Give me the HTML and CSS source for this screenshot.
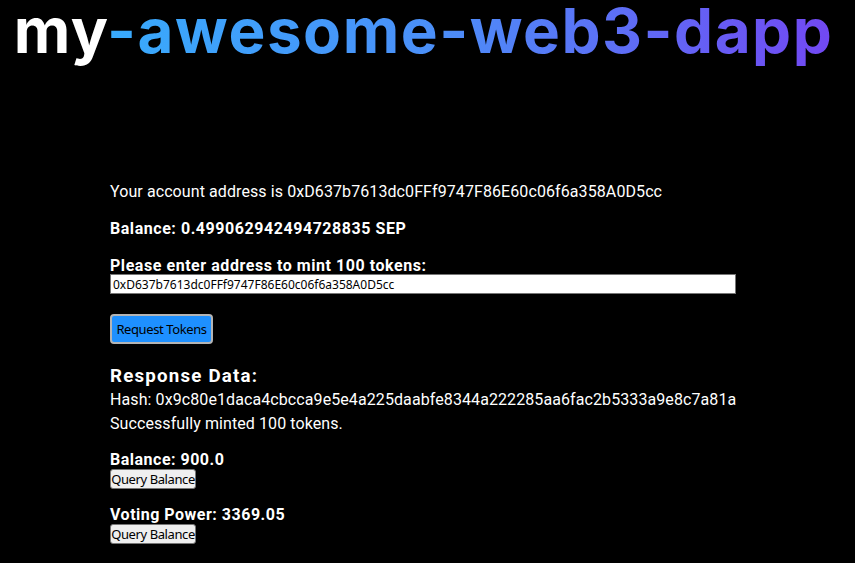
FILE: index.html
```html
<!DOCTYPE html>
<html lang="en">
<head>
<meta charset="utf-8">
<title>my-awesome-web3-dapp</title>
<link rel="stylesheet" href="styles.css">
</head>
<body>
<header class="hero">
  <h1 class="hero-title"><span class="hero-my">my</span><span class="hero-grad">-awesome-web3-dapp</span></h1>
</header>
<main class="panel">
  <p class="line">Your account address is 0xD637b7613dc0FFf9747F86E60c06f6a358A0D5cc</p>
  <p class="line line-bold">Balance: 0.499062942494728835 SEP</p>
  <label class="line line-bold mint-label" for="mint-addr">Please enter address to mint 100 tokens:</label>
  <input id="mint-addr" class="addr-input" type="text" value="0xD637b7613dc0FFf9747F86E60c06f6a358A0D5cc">
  <div class="request-row"><button class="btn-request" type="button">Request Tokens</button></div>
  <h3 class="response-title">Response Data:</h3>
  <div class="response-body">
    <div>Hash: 0x9c80e1daca4cbcca9e5e4a225daabfe8344a222285aa6fac2b5333a9e8c7a81a</div>
    <div>Successfully minted 100 tokens.</div>
  </div>
  <section class="query">
    <div class="query-label">Balance: 900.0</div>
    <button class="btn-query" type="button">Query Balance</button>
  </section>
  <section class="query">
    <div class="query-label">Voting Power: 3369.05</div>
    <button class="btn-query" type="button">Query Balance</button>
  </section>
</main>
</body>
</html>
```
FILE: styles.css
```css
html, body {
  margin: 0;
  padding: 0;
  background: #000;
  color: #fff;
  font-family: Roboto, "Noto Sans", sans-serif;
  font-size: 16px;
  line-height: 20px;
  letter-spacing: 0.09px;
}

.hero {
  text-align: center;
  padding-right: 8px;
}

.hero-title {
  margin: 0;
  font-family: Inter, "Liberation Sans", sans-serif;
  font-weight: 700;
  font-size: 62px;
  line-height: 62px;
  letter-spacing: 1.5px;
}

.hero-my {
  color: #fff;
}

.hero-grad {
  background: linear-gradient(90deg, #38aafc 0%, #4b8ff8 45%, #7248f3 100%);
  -webkit-background-clip: text;
  background-clip: text;
  color: transparent;
}

.panel {
  padding: 120px 0 0 110px;
  display: flex;
  flex-direction: column;
  align-items: flex-start;
}

.line {
  margin: 0 0 17px 0;
  display: block;
}

.line-bold {
  font-weight: 700;
  letter-spacing: 0.55px;
}

.mint-label {
  margin-bottom: 0;
}

.addr-input {
  box-sizing: border-box;
  width: 626px;
  height: 20px;
  margin: -2px 0 0 0;
  padding: 0 2px;
  border: 1px solid #767676;
  background: #fff;
  color: #000;
  font-family: "Noto Sans", "Open Sans", sans-serif;
  font-size: 12px;
  letter-spacing: 0;
}

.request-row {
  margin-top: 20px;
  display: flex;
}

.btn-request {
  box-sizing: border-box;
  width: 103px;
  height: 30px;
  padding: 0;
  white-space: nowrap;
  background: #1e90ff;
  border: 2px solid #b4b4b4;
  border-radius: 4px;
  color: #000;
  font-family: "Noto Sans", "Open Sans", sans-serif;
  font-size: 13px;
  letter-spacing: -0.4px;
}

.response-title {
  margin: 21px 0 0 0;
  font-size: 18.72px;
  line-height: 22px;
  font-weight: 700;
  letter-spacing: 1.2px;
}

.response-body {
  margin-top: 1px;
  line-height: 24px;
}

.query {
  margin-top: 14px;
  display: flex;
  flex-direction: column;
  align-items: flex-start;
}

.query + .query {
  margin-top: 16px;
}

.query-label {
  font-weight: 700;
  line-height: 19px;
  letter-spacing: 0.5px;
}

.btn-query {
  box-sizing: border-box;
  width: 86px;
  height: 20px;
  padding: 0;
  white-space: nowrap;
  background: #efefef;
  border: 1px solid #767676;
  border-radius: 3px;
  color: #000;
  font-family: "Noto Sans", "Open Sans", sans-serif;
  font-size: 13px;
  letter-spacing: -0.4px;
  line-height: 16px;
}
```
